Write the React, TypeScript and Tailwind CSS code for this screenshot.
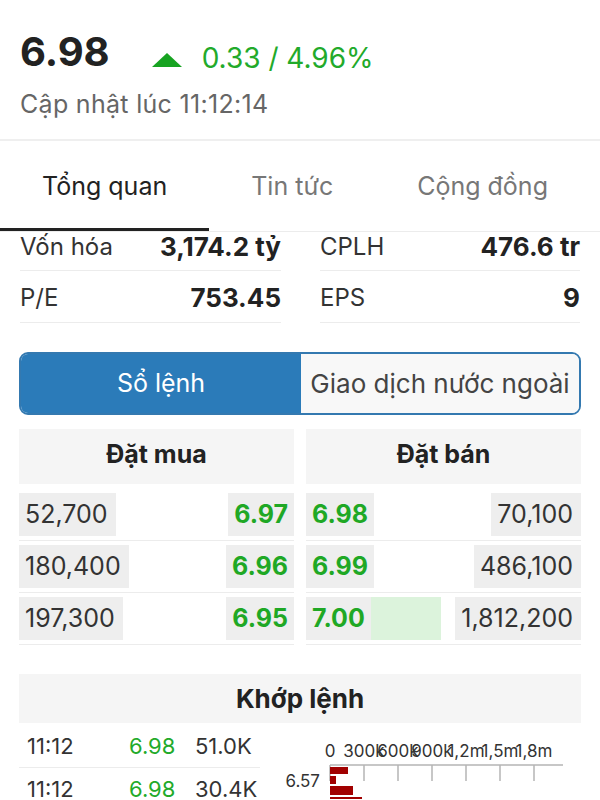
import React from 'react';

const buys = [
  { vol: '52,700', price: '6.97' },
  { vol: '180,400', price: '6.96' },
  { vol: '197,300', price: '6.95' },
];

const sells = [
  { price: '6.98', vol: '70,100', bar: 0 },
  { price: '6.99', vol: '486,100', bar: 0 },
  { price: '7.00', vol: '1,812,200', bar: 70 },
];

const trades = [
  { time: '11:12', price: '6.98', vol: '51.0K' },
  { time: '11:12', price: '6.98', vol: '30.4K' },
];

const axisLabels = ['0', '300k', '600k', '900k', '1,2m', '1,5m', '1,8m'];

function VolumeChart() {
  return (
    <svg width="321" height="76" viewBox="0 0 321 76" className="shrink-0">
      {axisLabels.map((l, i) => (
        <text key={l} x={70 + 34 * i} y={34} textAnchor="middle" fontSize="17" fill="#333" fontFamily="Inter, sans-serif">
          {l}
        </text>
      ))}
      <line x1="70" y1="42" x2="303" y2="42" stroke="#b5b5b5" strokeWidth="1.5" />
      {axisLabels.map((l, i) => (
        <line key={'t' + l} x1={70 + 34 * i} y1="42" x2={70 + 34 * i} y2="58" stroke="#b5b5b5" strokeWidth="1.5" />
      ))}
      <text x="60" y="64" textAnchor="end" fontSize="17" fill="#333" fontFamily="Inter, sans-serif">
        6.57
      </text>
      <rect x="70" y="44" width="18" height="7" fill="#a10000" />
      <rect x="70" y="53" width="6" height="8" fill="#a10000" />
      <rect x="70" y="63" width="23" height="9" fill="#a10000" />
      <rect x="70" y="74" width="32" height="6" fill="#a10000" />
    </svg>
  );
}

export default function App() {
  return (
    <div className="w-[600px] h-[800px] overflow-hidden bg-white text-[#222] font-['Inter',sans-serif]">
      {/* Price header */}
      <div className="px-5 pt-[32px] pb-[22px]">
        <div className="flex items-start">
          <div className="text-[40px] leading-none font-bold">6.98</div>
          <svg width="30" height="14" viewBox="0 0 30 14" className="ml-[42px] mt-[21px]">
            <polygon points="15,0 30,14 0,14" fill="#17a321" />
          </svg>
          <div className="ml-[20px] mt-[12px] text-[28px] leading-none text-[#22aa2a]">0.33 / 4.96%</div>
        </div>
        <div className="mt-[20px] text-[25px] leading-none tracking-[0.3px] text-[#666]">Cập nhật lúc 11:12:14</div>
      </div>
      <div className="h-[2px] bg-[#efefef]" />

      {/* Tabs */}
      <div className="flex h-[91px] border-b border-[#ececec]">
        {['Tổng quan', 'Tin tức', 'Cộng đồng'].map((t, i) => (
          <div key={t} className="flex flex-col px-[42px]">
            <div className={`flex-1 flex items-center pt-[4px] text-[25px] leading-none ${i === 0 ? 'text-[#222]' : 'text-[#777]'}`}>
              {t}
            </div>
            <div className={`h-[3px] -mx-[42px] ${i === 0 ? 'bg-[#222]' : 'bg-transparent'}`} />
          </div>
        ))}
      </div>

      {/* Stats */}
      <div className="grid grid-cols-[261px_260px] gap-x-[39px] px-5">
        {[
          [['Vốn hóa', '3,174.2 tỷ'], ['CPLH', '476.6 tr']],
          [['P/E', '753.45'], ['EPS', '9']],
        ].map((row, r) =>
          row.map(([k, v]) => (
            <div
              key={k}
              className={`flex justify-between items-center border-b border-[#ececec] text-[24px] leading-none ${r === 0 ? 'h-[39px] pb-[9px]' : 'h-[52px] pt-[2px]'}`}
            >
              <span className="text-[#333]">{k}</span>
              <span className="font-bold text-[26px]">{v}</span>
            </div>
          ))
        )}
      </div>

      {/* Segment */}
      <div className="mx-[19px] mt-[29px] flex h-[63px] rounded-[9px] border-[2px] border-[#3479b0] overflow-hidden">
        <div className="w-[280px] bg-[#2b7bb9] flex items-center justify-center text-white text-[25px] leading-none">Sổ lệnh</div>
        <div className="flex-1 bg-[#f8f8f8] flex items-center justify-center text-[#444] text-[26px] leading-none">
          Giao dịch nước ngoài
        </div>
      </div>

      {/* Order book */}
      <div className="mx-[19px] mt-[14px] grid grid-cols-2 gap-x-[12px]">
        <div>
          <div className="h-[55px] bg-[#f5f5f5] flex items-center justify-center pb-[5px] text-[25px] leading-none font-bold">Đặt mua</div>
          <div className="mt-[5px]">
            {buys.map((b) => (
              <div key={b.vol} className="py-[4px] border-b border-[#ececec]">
                <div className="h-[43px] flex justify-between">
                  <div className="bg-[#eeeeee] pl-[6px] pr-[8px] flex items-center text-[25px] leading-none text-[#333]">{b.vol}</div>
                  <div className="bg-[#eeeeee] px-[6px] flex items-center text-[25px] leading-none font-bold text-[#1fa825]">{b.price}</div>
                </div>
              </div>
            ))}
          </div>
        </div>
        <div>
          <div className="h-[55px] bg-[#f5f5f5] flex items-center justify-center pb-[5px] text-[25px] leading-none font-bold">Đặt bán</div>
          <div className="mt-[5px]">
            {sells.map((s) => (
              <div key={s.vol} className="py-[4px] border-b border-[#ececec]">
                <div className="h-[43px] flex">
                  <div className="bg-[#eeeeee] px-[6px] flex items-center text-[25px] leading-none font-bold text-[#1fa825]">{s.price}</div>
                  {s.bar > 0 && <div className="bg-[#dcf3dc]" style={{ width: s.bar }} />}
                  <div className="flex-1" />
                  <div className="bg-[#eeeeee] pl-[6px] pr-[8px] flex items-center text-[25px] leading-none text-[#333]">{s.vol}</div>
                </div>
              </div>
            ))}
          </div>
        </div>
      </div>

      {/* Matched orders */}
      <div className="mx-[19px] mt-[29px] h-[49px] bg-[#f5f5f5] flex items-center justify-center text-[26px] leading-none font-bold">
        Khớp lệnh
      </div>
      <div className="flex ml-[19px]">
        <div className="w-[241px] shrink-0">
          {trades.map((t, i) => (
            <div
              key={i}
              className={`flex pl-[8px] text-[22px] leading-none ${i === 0 ? 'pt-[12px] pb-[10px] border-b border-[#ececec]' : 'pt-[10px]'}`}
            >
              <span className="w-[102px] text-[#333]">{t.time}</span>
              <span className="w-[66px] text-[#22aa2a]">{t.price}</span>
              <span className="text-[#333]">{t.vol}</span>
            </div>
          ))}
        </div>
        <VolumeChart />
      </div>
    </div>
  );
}
